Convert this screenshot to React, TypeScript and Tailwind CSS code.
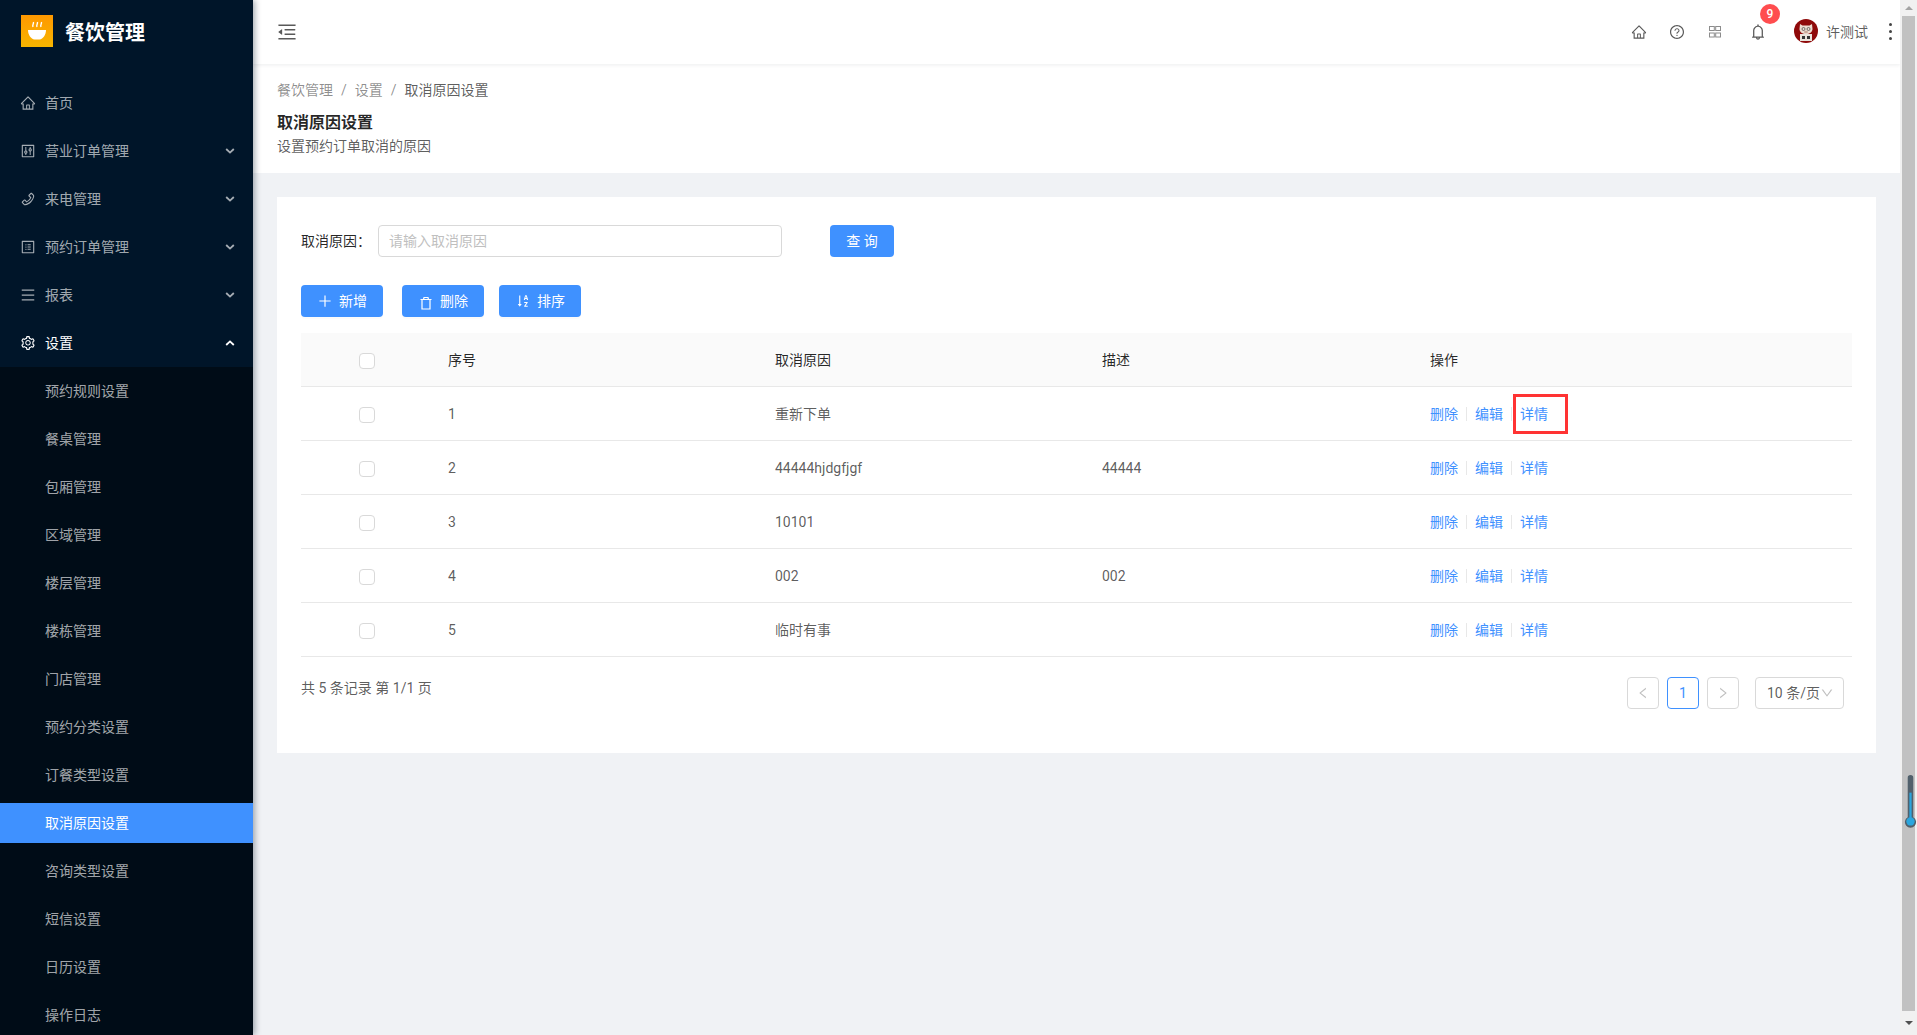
import {
  AiOutlineHome,
  AiOutlineControl,
  AiOutlinePhone,
  AiOutlineProfile,
  AiOutlineMenu,
  AiOutlineSetting,
  AiOutlineMenuFold,
  AiOutlineQuestionCircle,
  AiOutlineBell,
  AiOutlinePlus,
  AiOutlineSortAscending,
  AiOutlineLeft,
  AiOutlineRight,
  AiOutlineDown,
} from "react-icons/ai";

const topMenu = [
  { label: "营业订单管理", Icon: AiOutlineControl },
  { label: "来电管理", Icon: AiOutlinePhone },
  { label: "预约订单管理", Icon: AiOutlineProfile },
  { label: "报表", Icon: AiOutlineMenu },
];

const subMenu = [
  "预约规则设置",
  "餐桌管理",
  "包厢管理",
  "区域管理",
  "楼层管理",
  "楼栋管理",
  "门店管理",
  "预约分类设置",
  "订餐类型设置",
  "取消原因设置",
  "咨询类型设置",
  "短信设置",
  "日历设置",
  "操作日志",
];

const rows = [
  { id: 1, reason: "重新下单", desc: "" },
  { id: 2, reason: "44444hjdgfjgf", desc: "44444" },
  { id: 3, reason: "10101", desc: "" },
  { id: 4, reason: "002", desc: "002" },
  { id: 5, reason: "临时有事", desc: "" },
];

const Chevron = ({ up }: { up?: boolean }) => (
  <svg viewBox="0 0 10 6" className="ml-auto mr-[18px] h-[6px] w-[10px]" fill="none">
    <path
      d={up ? "M1.2 5 5 1.4 8.800 5" : "M1.200 1 5 4.600 8.800 1"}
      stroke="currentColor"
      strokeWidth="1.800"
    />
  </svg>
);

const Logo = () => (
  <svg viewBox="0 0 32 32" className="h-8 w-8 shrink-0">
    <defs>
      <linearGradient id="logoBg" x1="0" y1="0" x2="0" y2="1">
        <stop offset="0" stopColor="#ff9800" />
        <stop offset="1" stopColor="#f7b500" />
      </linearGradient>
    </defs>
    <rect width="32" height="32" fill="url(#logoBg)" />
    <path d="M7 15h18c0 5-3 9-6.500 9.500h-5C10 24 7 20 7 15Z" fill="#fff" />
    <path
      d="M12 12c-1-2 1-3 .4-5M16 12c-1-2 1-3 .4-5M20 12c-1-2 1-3 .4-5"
      stroke="#fff"
      strokeWidth="1.400"
      fill="none"
    />
  </svg>
);

const Avatar = () => (
  <svg viewBox="0 0 24 24" className="h-6 w-6 shrink-0">
    <circle cx="12" cy="12" r="12" fill="#8f0a0a" />
    <path d="M6 5l2.500 1.500h7L18 5l.5 5c0 3-3 5-6.500 5s-6.500-2-6.500-5Z" fill="#ecdcd0" />
    <circle cx="9.500" cy="10" r="1.500" fill="none" stroke="#444" strokeWidth=".7" />
    <circle cx="14.500" cy="10" r="1.500" fill="none" stroke="#444" strokeWidth=".7" />
    <ellipse cx="12" cy="13" rx="2" ry="1.200" fill="#c9a99a" />
    <rect x="6" y="15" width="12" height="7" fill="#e9e4dc" />
    <path d="M8 17h3v3H8zM13 17h3v3h-3z" fill="#333" />
  </svg>
);

const Checkbox = () => (
  <span className="mx-auto mt-[2px] block h-4 w-4 rounded-sm border border-[#d9d9d9] bg-white" />
);

const PrimaryButton = ({ icon, label }: { icon: React.ReactNode; label: string }) => (
  <button className="flex h-8 w-[82px] items-center gap-[6px] rounded bg-[#3f91ff] pl-4 text-white shadow-[0_2px_0_rgba(0,0,0,0.015)]">
    {icon}
    <span>{label}</span>
  </button>
);

const Divider = () => <span className="mx-2 h-[14px] w-px bg-[#e8e8e8]" />;

export default function App() {
  return (
    <div className="flex h-[1035px] overflow-hidden bg-[#f0f2f5] font-[Roboto,'Noto_Sans_CJK_SC',sans-serif] text-sm text-[rgba(0,0,0,0.65)]">
      {/* sidebar */}
      <aside className="relative z-10 w-[253px] shrink-0 bg-[#001529] text-[rgba(255,255,255,0.65)] shadow-[2px_0_6px_rgba(0,21,41,0.35)]">
        <div className="flex h-[83px] items-start gap-3 pl-[21px] pt-[15px]">
          <Logo />
          <span className="mt-[2px] text-xl/8 font-bold text-white">餐饮管理</span>
        </div>
        <nav className="flex flex-col gap-2">
          <div className="flex h-10 items-center gap-2 pl-5">
            <AiOutlineHome className="text-base" />
            <span className="ml-px">首页</span>
          </div>
          {topMenu.map(({ label, Icon }) => (
            <div key={label} className="flex h-10 items-center gap-2 pl-5">
              <Icon className="text-base" />
              <span className="ml-px">{label}</span>
              <Chevron />
            </div>
          ))}
          <div className="flex h-10 items-center gap-2 pl-5 text-white">
            <AiOutlineSetting className="text-base" />
            <span className="ml-px">设置</span>
            <Chevron up />
          </div>
        </nav>
        <div className="mt-1 flex flex-col gap-2 bg-[#000c17] pb-2 pt-1">
          {subMenu.map((label) => (
            <div
              key={label}
              className={
                label === "取消原因设置"
                  ? "flex h-10 items-center bg-[#3f91ff] pl-[45px] text-white"
                  : "flex h-10 items-center pl-[45px]"
              }
            >
              {label}
            </div>
          ))}
        </div>
      </aside>

      <div className="flex min-w-0 flex-1 flex-col">
        {/* header */}
        <header className="relative flex h-[64px] shrink-0 items-center bg-white pl-[23px] shadow-[0_1px_4px_rgba(0,21,41,0.08)]">
          <AiOutlineMenuFold className="text-[22px] text-[#595959]" />
          <div className="ml-auto flex items-center text-[#595959]">
            <AiOutlineHome className="h-4 w-4" />
            <AiOutlineQuestionCircle className="ml-[22px] h-4 w-4" />
            <svg viewBox="0 0 12 12" className="ml-[24px] mr-[2px] h-3 w-3" fill="none" stroke="#8c8c8c">
              <rect x=".5" y=".5" width="4.800" height="4" />
              <rect x="6.700" y=".5" width="4.800" height="4" />
              <rect x=".5" y="7" width="4.800" height="4" />
              <rect x="6.700" y="7" width="4.800" height="4" />
            </svg>
            <div className="relative ml-[26px] h-[18px] w-[18px]">
              <AiOutlineBell className="h-[18px] w-[18px]" />
              <span className="absolute -right-[13px] -top-[19px] flex h-5 w-5 items-center justify-center rounded-full bg-[#ff4d4f] text-xs font-medium text-white">
                9
              </span>
            </div>
            <div className="mb-[2px] ml-[27px]">
              <Avatar />
            </div>
            <span className="ml-2 text-[rgba(0,0,0,0.65)]">许测试</span>
            <div className="mb-[2px] ml-3 flex h-5 w-5 flex-col items-center justify-center gap-[4px]">
              <span className="h-[3px] w-[3px] rounded-full bg-[#444]" />
              <span className="h-[3px] w-[3px] rounded-full bg-[#444]" />
              <span className="h-[3px] w-[3px] rounded-full bg-[#444]" />
            </div>
          </div>
        </header>

        {/* page heading */}
        <section className="bg-white pb-4 pl-6 pt-[15px]">
          <div className="flex leading-[22px] text-[rgba(0,0,0,0.45)]">
            <span>餐饮管理</span>
            <span className="mx-2">/</span>
            <span>设置</span>
            <span className="mx-2">/</span>
            <span className="text-[rgba(0,0,0,0.65)]">取消原因设置</span>
          </div>
          <h1 className="mt-[10px] text-base/6 font-semibold text-[rgba(0,0,0,0.85)]">取消原因设置</h1>
          <p className="leading-[22px]">设置预约订单取消的原因</p>
        </section>

        {/* card */}
        <main className="m-6 bg-white px-6 pb-11 pt-7">
          <div className="flex items-center">
            <label className="w-[77px] text-[rgba(0,0,0,0.85)]">取消原因：</label>
            <input
              placeholder="请输入取消原因"
              className="h-8 w-[404px] rounded border border-[#d9d9d9] px-[10px] placeholder:text-[#bfbfbf]"
            />
            <button className="ml-12 h-8 w-16 rounded bg-[#3f91ff] text-white">查 询</button>
          </div>

          <div className="mt-7 flex">
            <PrimaryButton icon={<AiOutlinePlus className="text-base" />} label="新增" />
            <div className="ml-[19px]">
              <PrimaryButton
                icon={
                  <svg viewBox="0 0 14 14" className="mx-px mt-[3px] h-[14px] w-[14px]" fill="none" stroke="currentColor" strokeWidth="1.200">
                    <path d="M1.500 3.500h11M3 3.500v9.500h8V3.500M4.500 3.500 5 1.500h4l.5 2" />
                  </svg>
                }
                label="删除"
              />
            </div>
            <div className="ml-[15px]">
              <PrimaryButton icon={<AiOutlineSortAscending className="text-base" />} label="排序" />
            </div>
          </div>

          <table className="mt-4 w-full table-fixed border-collapse">
            <colgroup>
              <col className="w-[131px]" />
              <col className="w-[327px]" />
              <col className="w-[327px]" />
              <col className="w-[328px]" />
              <col />
            </colgroup>
            <thead>
              <tr className="h-[53px] border-b border-[#e8e8e8] bg-[#fafafa] text-left text-[rgba(0,0,0,0.85)]">
                <th className="pt-[2px] font-normal">
                  <Checkbox />
                </th>
                <th className="px-4 pt-[2px] font-normal">序号</th>
                <th className="px-4 pt-[2px] font-normal">取消原因</th>
                <th className="px-4 pt-[2px] font-normal">描述</th>
                <th className="px-4 pt-[2px] font-normal">操作</th>
              </tr>
            </thead>
            <tbody>
              {rows.map((row) => (
                <tr key={row.id} className="h-[54px] border-b border-[#e8e8e8]">
                  <td className="pt-[2px]">
                    <Checkbox />
                  </td>
                  <td className="px-4 pt-[2px]">{row.id}</td>
                  <td className="px-4 pt-[2px]">{row.reason}</td>
                  <td className="px-4 pt-[2px]">{row.desc}</td>
                  <td className="relative px-4 pt-[2px]">
                    <div className="flex items-center text-[#3f91ff]">
                      <span>删除</span>
                      <Divider />
                      <span>编辑</span>
                      <Divider />
                      <span>详情</span>
                    </div>
                    {row.id === 1 && (
                      <span className="absolute left-[99px] top-[7px] h-10 w-[55px] border-[3px] border-[#f33]" />
                    )}
                  </td>
                </tr>
              ))}
            </tbody>
          </table>

          <div className="mt-5 flex items-start">
            <span className="leading-[22px]">共 5 条记录 第 1/1 页</span>
            <div className="ml-auto mr-[8px] flex">
              <span className="flex h-8 w-8 items-center justify-center rounded border border-[#d9d9d9] text-[#bfbfbf]">
                <AiOutlineLeft className="text-sm" />
              </span>
              <span className="ml-2 flex h-8 w-8 items-center justify-center rounded border border-[#3f91ff] text-[#3f91ff]">
                1
              </span>
              <span className="ml-2 flex h-8 w-8 items-center justify-center rounded border border-[#d9d9d9] text-[#bfbfbf]">
                <AiOutlineRight className="text-sm" />
              </span>
              <span className="ml-4 flex h-8 w-[89px] items-center rounded border border-[#d9d9d9] pl-[11px]">
                10 条/页
                <AiOutlineDown className="text-sm text-[#bfbfbf]" />
              </span>
            </div>
          </div>
        </main>
      </div>

      {/* browser scrollbar */}
      <div className="relative flex w-[17px] shrink-0 flex-col bg-[#f1f1f1]">
        <div className="flex h-4 items-center justify-center">
          <span className="h-0 w-0 border-x-[4px] border-b-[4px] border-x-transparent border-b-[#a3a3a3]" />
        </div>
        <div className="ml-[2px] w-[13px] flex-1 bg-[#c1c1c1]" />
        <div className="flex h-6 items-center justify-center">
          <span className="h-0 w-0 border-x-[4px] border-t-[4px] border-x-transparent border-t-[#505050]" />
        </div>
        <svg viewBox="0 0 14 58" className="absolute left-[4px] top-[772px] h-[58px] w-[13px]">
          <path d="M4 4a3 3 0 0 1 6 0v42.500a6 6 0 1 1-6 0Z" fill="#51606b" />
          <rect x="5.800" y="20" width="2.400" height="30" fill="#2ba6de" />
          <circle cx="7" cy="51" r="4.500" fill="#2ba6de" />
        </svg>
      </div>
    </div>
  );
}
